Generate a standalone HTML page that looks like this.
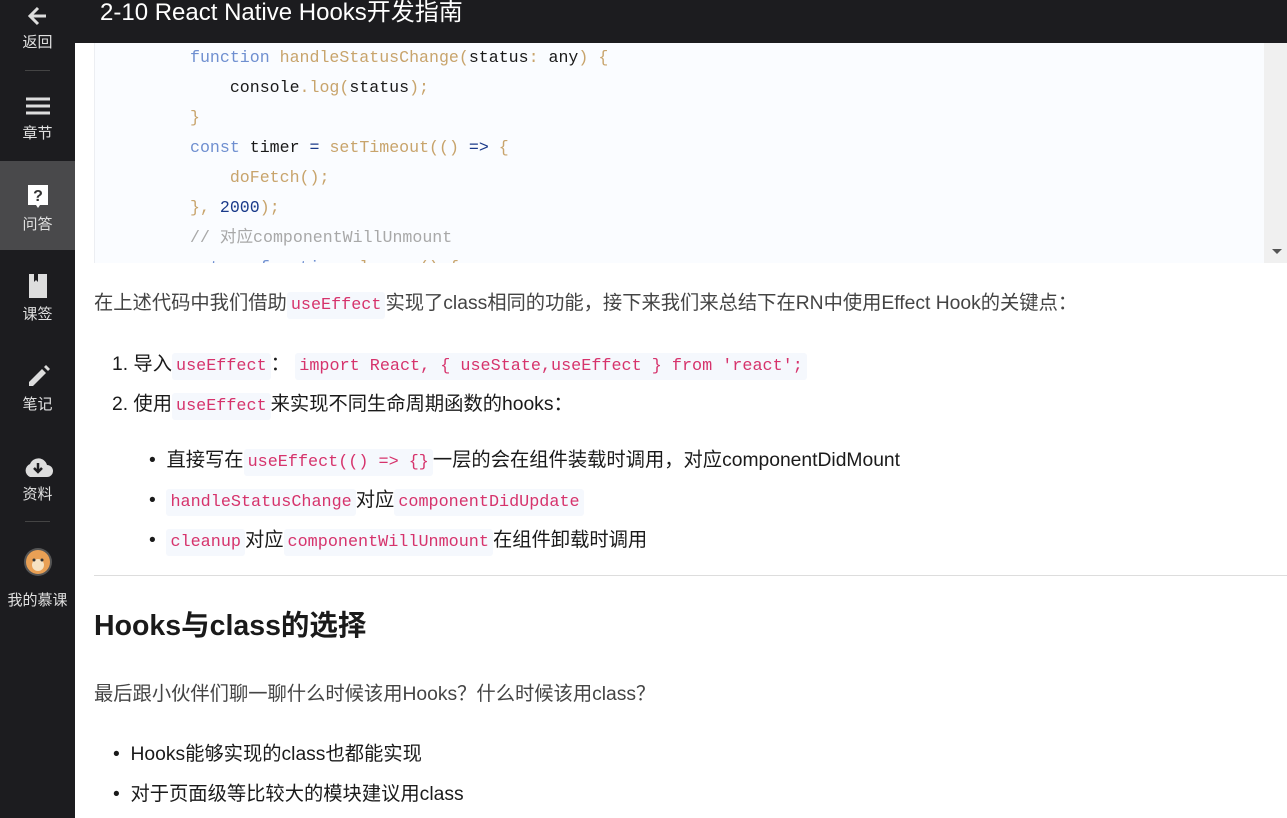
<!DOCTYPE html>
<html><head><meta charset="utf-8"><style>
*{margin:0;padding:0;box-sizing:border-box}
body{width:1287px;height:818px;overflow:hidden;background:#fff;font-family:"Liberation Sans","Noto Sans CJK SC",sans-serif;position:relative}
.side{position:absolute;left:0;top:0;width:75px;height:818px;background:#1c1c1f;color:#d8d8d8}
.it{position:absolute;left:0;width:75px;text-align:center;font-size:15px;color:#e0e0e0}
.it svg{display:block;margin:0 auto}
.sep{position:absolute;left:25px;width:25px;height:1px;background:#444}
.head{position:absolute;left:75px;top:0;width:1212px;height:43px;background:#1c1c1f;color:#fff;font-size:24px;line-height:26px;padding-left:25px}
.code{position:absolute;left:94px;top:43px;width:1170px;height:220px;background:#fafcff;border-left:1px solid #eceef2;overflow:hidden;font-family:"Liberation Mono","Noto Sans CJK SC",monospace;font-size:16.6px;line-height:30px;color:#1a1a1a}
.code pre{font:inherit;position:absolute;left:95px;top:0px}
.sb{position:absolute;left:1264px;top:43px;width:23px;height:220px;background:#f0f0f0}
.k{color:#6f8fd0}.f{color:#c8a46c}.n{color:#1a3a8a}.c{color:#a8a8a8}.p{color:#c8a46c}
.main{position:absolute;left:94px;top:0;width:1190px;color:#333;font-size:19.3px}
code{font-family:"Liberation Mono",monospace;font-size:16.8px;color:#d6336c;background:#f5f8fd;padding:4px 4px;border-radius:3px}
.t{position:absolute;white-space:nowrap}
.dk{color:#1a1a1a}
</style></head><body>
<div class="side">
 <div class="it" style="top:4px"><svg width="24" height="24" viewBox="0 0 24 24"><path d="M20 12H5M12 4l-8 8 8 8" stroke="#ddd" stroke-width="3" fill="none"/></svg><div style="margin-top:3px">返回</div></div>
 <div class="sep" style="top:70px"></div>
 <div class="it" style="top:96px"><svg width="26" height="20" viewBox="0 0 26 20"><path d="M1 3h24M1 10h24M1 17h24" stroke="#ddd" stroke-width="3"/></svg><div style="margin-top:6px">章节</div></div>
 <div style="position:absolute;top:161px;left:0;width:75px;height:89px;background:#49494b"></div>
 <div class="it" style="top:183px"><svg width="24" height="28" viewBox="0 0 24 28"><path d="M2 2h20v20h-8l-2 3-2-3H2z" fill="#fff"/><text x="12" y="18" font-size="16" font-weight="bold" text-anchor="middle" fill="#333" font-family="Liberation Sans">?</text></svg><div style="margin-top:2px">问答</div></div>
 <div class="it" style="top:273px"><svg width="24" height="26" viewBox="0 0 24 26"><path d="M3 1h18v24H3z" fill="#ddd"/><path d="M8 1v8l2-2 2 2V1" fill="#1c1c1f"/></svg><div style="margin-top:4px">课签</div></div>
 <div class="it" style="top:363px"><svg width="26" height="26" viewBox="0 0 26 26"><path d="M4 19l13-13 4 4-13 13H4z" fill="#ddd"/><path d="M19 4l2-2 4 4-2 2z" fill="#ddd"/></svg><div style="margin-top:4px">笔记</div></div>
 <div class="it" style="top:455px"><svg width="32" height="24" viewBox="0 0 32 24"><path d="M8 22a7 7 0 0 1 0-13 9 9 0 0 1 17 1 6 6 0 0 1 0 12z" fill="#ddd"/><path d="M16 8v8M12 13l4 4 4-4" stroke="#1c1c1f" stroke-width="2.5" fill="none"/></svg><div style="margin-top:4px">资料</div></div>
 <div class="sep" style="top:521px"></div>
 <div class="it" style="top:547px"><svg width="30" height="30" viewBox="0 0 30 30"><circle cx="15" cy="15" r="14" fill="#555"/><circle cx="15" cy="15" r="12" fill="#e9a055"/><circle cx="15" cy="18" r="6" fill="#f6e2c2"/><circle cx="11" cy="13" r="1.5" fill="#333"/><circle cx="19" cy="13" r="1.5" fill="#333"/></svg><div style="margin-top:12px">我的慕课</div></div>
</div>
<div class="head">2-10 React Native Hooks开发指南</div>
<div class="code"><pre><span class="k">function</span> <span class="f">handleStatusChange(</span>status<span class="p">:</span> any<span class="p">) {</span>
    console<span class="p">.log(</span>status<span class="p">);</span>
<span class="p">}</span>
<span class="k">const</span> timer <span class="n">=</span> <span class="f">setTimeout(() </span><span class="n">=&gt;</span> <span class="p">{</span>
    <span class="f">doFetch();</span>
<span class="p">},</span> <span class="n">2000</span><span class="p">);</span>
<span class="c">// 对应componentWillUnmount</span>
<span class="k">return</span> <span class="k">function</span> <span class="f">cleanup() {</span></pre></div>
<div class="sb"><div style="position:absolute;left:8px;top:206px;border-left:5px solid transparent;border-right:5px solid transparent;border-top:5px solid #555"></div></div>
<div class="main">
 <div class="t" style="top:287px;color:#444">在上述代码中我们借助<code>useEffect</code>实现了class相同的功能，接下来我们来总结下在RN中使用Effect Hook的关键点：</div>
 <div class="t dk" style="top:348px;left:18px">1. 导入<code>useEffect</code>： <code>import React, { useState,useEffect } from 'react';</code></div>
 <div class="t dk" style="top:388px;left:18px">2. 使用<code>useEffect</code>来实现不同生命周期函数的hooks：</div>
 <div class="t dk" style="top:444px;left:55px">•&nbsp; 直接写在<code>useEffect(() =&gt; {}</code>一层的会在组件装载时调用，对应componentDidMount</div>
 <div class="t dk" style="top:484px;left:55px">•&nbsp; <code>handleStatusChange</code>对应<code>componentDidUpdate</code></div>
 <div class="t dk" style="top:524px;left:55px">•&nbsp; <code>cleanup</code>对应<code>componentWillUnmount</code>在组件卸载时调用</div>
 <div style="position:absolute;top:575px;left:0;width:1193px;height:1px;background:#ddd"></div>
 <div class="t" style="top:603px;font-size:28.5px;font-weight:bold;color:#1a1a1a">Hooks与class的选择</div>
 <div class="t" style="top:678px;color:#444">最后跟小伙伴们聊一聊什么时候该用Hooks？什么时候该用class？</div>
 <div class="t dk" style="top:738px;left:19px">•&nbsp; Hooks能够实现的class也都能实现</div>
 <div class="t dk" style="top:778px;left:19px">•&nbsp; 对于页面级等比较大的模块建议用class</div>
</div>
</body></html>
